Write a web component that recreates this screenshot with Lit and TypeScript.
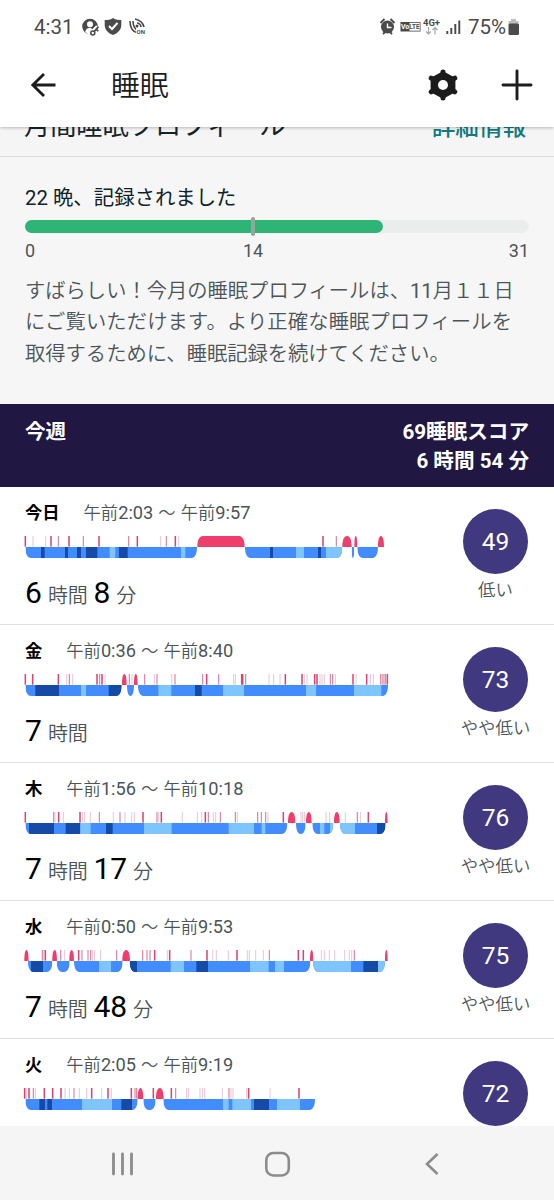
import { LitElement, html, css, svg } from "lit";
import { customElement, property } from "lit/decorators.js";

type Span = [number, number];
type Night = {
  day: string;
  range: string;
  duration: [string, string][];
  score: number;
  label: string;
  groups: Span[];
  deep: Span[];
  light: Span[];
  awake: Span[];
  strong: number[];
  medium: number[];
  faint: number[];
};

// Chart coordinates are in thirds of a pixel.
const nights: Night[] = [
  {
    day: "今日", range: "午前2:03 〜 午前9:57", duration: [["6", "時間"], ["8", "分"]], score: 49, label: "低い",
    groups: [[76, 591], [735, 1027], [1055, 1063], [1072, 1134]],
    deep: [[123, 134], [195, 204], [231, 243], [258, 292], [357, 383], [810, 819], [954, 963]],
    light: [[329, 346], [543, 556], [888, 912], [978, 1027]],
    awake: [[592, 734], [1027, 1055], [1063, 1072], [1134, 1152]],
    strong: [76, 153, 207, 297, 412, 526, 969],
    medium: [175, 250, 386, 499, 1009],
    faint: [99, 137, 482, 536],
  },
  {
    day: "金", range: "午前0:36 〜 午前8:40", duration: [["7", "時間"]], score: 73, label: "やや低い",
    groups: [[76, 365], [381, 402], [414, 1164]],
    deep: [[106, 177], [326, 365], [585, 605]],
    light: [[243, 258], [475, 514], [669, 732], [918, 948], [1062, 1144]],
    awake: [[366, 380], [402, 413]],
    strong: [76, 98, 175, 291, 306, 620, 725, 728, 856, 906, 944, 951, 1059, 1100, 1162],
    medium: [208, 299, 388, 434, 471, 525, 608, 656, 737, 991, 998, 1142, 1149, 1156],
    faint: [200, 218, 315, 396, 463, 515, 701, 706, 807, 821, 840, 913, 921, 960, 966, 973, 1006, 1068, 1111, 1120, 1146, 1153],
  },
  {
    day: "木", range: "午前1:56 〜 午前10:18", duration: [["7", "時間"], ["17", "分"]], score: 76, label: "やや低い",
    groups: [[76, 862], [888, 917], [937, 1000], [1020, 1157]],
    deep: [[87, 162], [197, 240], [318, 338], [1131, 1157]],
    light: [[241, 272], [432, 515], [686, 762], [785, 796], [960, 973], [990, 1000], [1020, 1065]],
    awake: [[864, 886], [918, 935], [1002, 1019], [1155, 1163]],
    strong: [76, 176, 240, 429, 484, 616, 850, 1105],
    medium: [161, 298, 360, 471, 625, 661, 706, 773, 784, 797, 1072],
    faint: [165, 190, 248, 254, 271, 340, 375, 395, 403, 476, 547, 592, 605, 640, 647, 712, 804, 903, 908, 914, 978, 989, 1036, 1082],
  },
  {
    day: "水", range: "午前0:50 〜 午前9:53", duration: [["7", "時間"], ["48", "分"]], score: 75, label: "やや低い",
    groups: [[84, 157], [170, 209], [222, 368], [389, 931], [939, 1155]],
    deep: [[93, 129], [389, 411], [589, 624], [1090, 1134]],
    light: [[297, 333], [512, 552], [750, 806], [825, 852], [939, 1053], [1134, 1155]],
    awake: [[73, 86], [157, 171], [208, 222], [367, 390], [930, 940], [1155, 1163]],
    strong: [136, 236, 464, 509, 621, 711, 895, 910],
    medium: [127, 182, 246, 264, 272, 350, 428, 441, 450, 573, 808, 1063],
    faint: [131, 194, 278, 284, 302, 502, 638, 649, 685, 742, 748, 767, 790, 964, 973, 988, 1004, 1034, 1048, 1055],
  },
  {
    day: "火", range: "午前2:05 〜 午前9:19", duration: [], score: 72, label: "",
    groups: [[76, 413], [430, 467], [490, 945]],
    deep: [[118, 135], [142, 156], [364, 396], [762, 807]],
    light: [[246, 336], [669, 686], [697, 753], [831, 900]],
    awake: [[413, 430], [468, 491]],
    strong: [74, 87, 133, 158, 183, 275, 324, 394, 460, 514, 746, 897],
    medium: [100, 222, 405, 410, 527, 687],
    faint: [79, 106, 195, 208, 238, 260, 305, 334, 560, 565, 600, 607, 614, 667, 693, 699, 740, 810],
  },
];

const trough = ([a, b]: Span) => {
  const r = Math.min(17, (b - a) / 2);
  return `M${a} 33C${a} 50 ${a + r * 0.25} 66 ${a + r} 66H${b - r}C${b - r * 0.25} 66 ${b} 50 ${b} 33Z`;
};
const hump = ([a, b]: Span) => {
  const r = Math.min(17, (b - a) / 2);
  return `M${a} 33C${a} 16 ${a + r * 0.25} 0 ${a + r} 0H${b - r}C${b - r * 0.25} 0 ${b} 16 ${b} 33Z`;
};

@customElement("sleep-night")
class SleepNight extends LitElement {
  @property({ attribute: false }) night!: Night;

  static styles = css`
    :host { display: block; height: 138px; box-sizing: border-box; border-bottom: 1px solid #e0e0e0; padding: 0 25px; background: #fff; }
    .row { display: flex; justify-content: space-between; }
    .info { display: flex; flex-direction: column; padding-top: 12px; }
    .head { display: flex; gap: 24px; height: 28px; line-height: 28px; font-size: 17.3px; white-space: nowrap; }
    .day { font-weight: 700; color: #000; }
    .range { color: #4b5559; font-size: 18.2px; font-weight: 450; word-spacing: 0.6px; }
    .kanji { font-size: 17.3px; font-weight: 350; }
    .chart { display: block; width: 365px; height: 22px; margin-top: 9px; overflow: visible; }
    .mid { fill: #418cff; }
    .deep { fill: #154ba6; }
    .light { fill: #7ec4ff; }
    .awake { fill: #ee3e6c; }
    .strong { fill: #db456c; }
    .medium { fill: #dc7f9a; }
    .faint { fill: #efc7d4; }
    .duration { display: flex; height: 36px; line-height: 36px; margin-top: 17px; white-space: nowrap; }
    .num { font-size: 30px; color: #000; }
    .unit { font-size: 20px; color: #4b5559; font-weight: 350; margin: 3px 5.5px 0 6px; }
    .score { width: 65px; display: flex; flex-direction: column; align-items: center; padding: 21.5px 1px 0 0; }
    .circle { width: 65px; height: 65px; border-radius: 50%; background: #41397f; color: #fff; font-size: 24.5px; line-height: 66px; text-align: center; }
    .label { margin-top: 2.5px; font-size: 17.4px; font-weight: 350; line-height: 28px; color: #4b5559; white-space: nowrap; }
  `;

  render() {
    const n = this.night;
    const bars = (list: Span[], cls: string) =>
      list.map(([a, b]) => svg`<rect class=${cls} x=${a} y="33" width=${b - a} height="33"></rect>`);
    const ticks = (list: number[], cls: string, w: number) =>
      list.map((x) => svg`<rect class=${cls} x=${x - w / 2} y="0" width=${w} height="32"></rect>`);
    const range = n.range.split(/(午前|〜)/).map((t) => (/[午〜]/.test(t) ? html`<span class="kanji">${t}</span>` : t));
    return html`
      <div class="row">
        <div class="info">
          <div class="head"><span class="day">${n.day}</span><span class="range">${range}</span></div>
          <svg class="chart" viewBox="75 0 1095 66">
            <clipPath id="asleep"><path d=${n.groups.map(trough).join("")}></path></clipPath>
            <g clip-path="url(#asleep)">${bars(n.groups, "mid")}${bars(n.deep, "deep")}${bars(n.light, "light")}</g>
            ${ticks(n.faint, "faint", 3.2)}${ticks(n.medium, "medium", 3.4)}${ticks(n.strong, "strong", 4.6)}
            <path class="awake" d=${n.awake.map(hump).join("")}></path>
          </svg>
          <div class="duration">
            ${n.duration.map(([v, u]) => html`<span class="num">${v}</span><span class="unit">${u}</span>`)}
          </div>
        </div>
        <div class="score">
          <div class="circle">${n.score}</div>
          <div class="label">${n.label}</div>
        </div>
      </div>`;
  }
}

@customElement("app-root")
class AppRoot extends LitElement {
  static styles = css`
    :host { display: flex; flex-direction: column; width: 554px; height: 1200px; overflow: hidden; background: #fff;
      font-family: Roboto, "Noto Sans CJK JP", sans-serif; }
    svg { display: block; flex: none; }
    .status { display: flex; align-items: center; justify-content: space-between; height: 43px; padding: 11px 33px 0 34px; box-sizing: border-box; color: #4a4a4a; font-size: 20.5px; line-height: 32px; }
    .side { display: flex; align-items: center; }
    .notices { margin-left: -2px; }
    .tiny { font-size: 6px; font-weight: 700; fill: #4a4a4a; }
    .volte { font-size: 7px; font-weight: 700; fill: #fff; }
    .net { font-size: 9.5px; font-weight: 700; fill: #4a4a4a; }
    .lte { fill: #4a4a4a; font-size: 6.5px; }
    .appbar { display: flex; align-items: center; height: 84px; flex: none; padding: 0 21px 0 30px; box-sizing: border-box; background: #fff; box-shadow: 0 1px 3px rgba(0,0,0,.25); clip-path: inset(0 0 -6px 0); z-index: 1; }
    .title { flex: 1; margin-left: 55px; font-size: 28.8px; line-height: 40px; color: #1c1c1c; font-weight: 350; padding-top: 1px; }
    .plus { margin-left: 42px; }
    .profile { display: flex; align-items: flex-end; justify-content: space-between; height: 30px; flex: none; box-sizing: border-box; overflow: hidden; padding: 0 28px 11px 24px; background: #f5f5f5; border-bottom: 1px solid #dcdcdc; white-space: nowrap; }
    .heading { font-size: 26.2px; line-height: 38px; color: #15242b; }
    .more { font-size: 23.6px; line-height: 36px; color: #107a7c; font-weight: 500; }
    .progress { height: 247px; flex: none; box-sizing: border-box; padding: 27px 25px 0; background: #f6f6f6; color: #4b5559; }
    .nights { font-size: 20.4px; line-height: 28px; color: #10222a; }
    .track { display: grid; margin-top: 5px; height: 19px; align-items: center; }
    .track > * { grid-area: 1 / 1; }
    .rail { height: 13px; border-radius: 7px; background: #ebedec; }
    .fill { height: 13px; width: 358px; border-radius: 7px; background: #2eb575; }
    .mark { width: 4px; height: 19px; border-radius: 2px; background: #94a59d; margin-left: 226px; }
    .scale { display: grid; grid-template-columns: 1fr 1fr 1fr; width: 504px; margin-top: 2px; font-size: 18px; line-height: 26px; }
    .half { text-align: center; margin-left: -48px; }
    .full { text-align: right; }
    .message { margin: 12px 0 0; font-size: 20.3px; line-height: 31.3px; font-weight: 350; white-space: nowrap; }
    .digits { font-weight: 400; }
    .wide { letter-spacing: 0.15px; }
    .week { display: flex; justify-content: space-between; height: 83px; flex: none; box-sizing: border-box; padding: 14px 25px 0; background: #201842; color: #fff; font-size: 20.6px; line-height: 29px; font-weight: 700; }
    .total { text-align: right; }
    .list { flex: 1; min-height: 0; overflow: hidden; }
    .nav { display: flex; align-items: center; height: 74px; flex: none; background: #f5f5f5; }
  `;

  render() {
    return html`
      <div class="status">
        <div class="side">
          <span>4:31</span>
          <svg class="notices" width="76" height="22" viewBox="0 0 76 22">
            <circle cx="18" cy="10.500" r="7.800" fill="#4a4a4a"></circle>
            <circle cx="18" cy="8.300" r="3" fill="#fff"></circle>
            <path d="M13.200 16c.5-3 2.500-4.300 4.800-4.300l2 1v5.600h-4Z" fill="#fff"></path>
            <path d="M19.500 19.500l-1.500-4 6-6 4 1-2 9Z" fill="#fff"></path>
            <circle cx="20.800" cy="17" r="2" fill="none" stroke="#4a4a4a" stroke-width="1.500"></circle>
            <path d="M22.200 15.500l4.300-4.800M24.300 13.300l2 1.800" fill="none" stroke="#4a4a4a" stroke-width="1.800"></path>
            <path d="M41 2c3 2 5.500 2 8.300 2v5c0 5-4 8.300-8.300 10-4.300-1.700-8.300-5-8.300-10V4c3 0 5.500 0 8.300-2Z" fill="#4a4a4a"></path>
            <path d="M37 10l3 3 5.500-6" fill="none" stroke="#fff" stroke-width="2"></path>
            <path d="M58 5c0 7 3 11 8 12M61 5c0 4 1 7 4 9M63 3c5 1 8 4 9 8M65 7c2 0 4 2 4 4" fill="none" stroke="#4a4a4a" stroke-width="1.600"></path>
            <circle cx="65" cy="10" r="1.500" fill="#4a4a4a"></circle>
            <rect x="64" y="12" width="10" height="7" fill="#fff"></rect>
            <text class="tiny" x="64.500" y="18">ON</text>
          </svg>
        </div>
        <div class="side">
          <svg width="89" height="22" viewBox="0 0 89 22">
            <circle cx="8.500" cy="11" r="6.500" fill="#4a4a4a"></circle>
            <path d="M8.500 7.500v4h4" fill="none" stroke="#fff" stroke-width="1.400"></path>
            <path d="M1.500 7l4-4M15.500 7l-4-4M4 18l2-2M13 18l-2-2" stroke="#4a4a4a" stroke-width="1.900"></path>
            <rect x="21.500" y="6" width="20" height="9.500" fill="#4a4a4a"></rect>
            <rect x="30.500" y="6.800" width="10.300" height="7.900" fill="#fff"></rect>
            <text class="volte" x="22" y="13.300" textLength="18.500" lengthAdjust="spacingAndGlyphs">Vo<tspan class="lte">LTE</tspan></text>
            <text class="net" x="44" y="9.500" textLength="17">4G+</text>
            <path d="M49.500 11v7m-2.500-2.500l2.500 2.500 2.500-2.500M56 18.500v-7m-2.500 2.500l2.500-2.500 2.500 2.500" fill="none" stroke="#a8a8a8" stroke-width="1.200"></path>
            <path d="M68.300 15v3M72.300 12v6M76.300 8v10M80.300 4.500v13.500" stroke="#4a4a4a" stroke-width="1.900"></path>
          </svg>
          <span>75%</span>
          <svg width="15" height="20" viewBox="0 0 15 20">
            <path d="M5 2h5v2h2.500v4h-10V4H5Z" fill="#bdbdbd"></path>
            <rect x="2.500" y="6.500" width="10.500" height="11.500" rx="1.500" fill="#4a4a4a"></rect>
          </svg>
        </div>
      </div>
      <div class="appbar">
        <svg width="26" height="26" viewBox="0 0 26 26"><path d="M14 2L2.800 13 14 24M3 13h22.500" fill="none" stroke="#1c1c1c" stroke-width="2.800"></path></svg>
        <div class="title">睡眠</div>
        <svg width="31" height="32" viewBox="-15 -16 31 32">
          <path d="M0-12.300L10.900-6.200V6.200L0 12.300-10.900 6.200V-6.200Z" fill="#1c1c1c" stroke="#1c1c1c" stroke-width="3" stroke-linejoin="round"></path>
          <path d="M0-13V13M-11.800-6.800L11.800 6.800M-11.800 6.800L11.800-6.800" stroke="#1c1c1c" stroke-width="5" stroke-linecap="round"></path>
          <circle r="5" fill="#fff"></circle>
        </svg>
        <svg class="plus" width="32" height="32" viewBox="-16 -16 32 32"><path d="M-14 0H14M0-14V14" stroke="#1c1c1c" stroke-width="2.900" stroke-linecap="round"></path></svg>
      </div>
      <div class="profile"><span class="heading">月間睡眠プロフィール</span><span class="more">詳細情報</span></div>
      <div class="progress">
        <div class="nights">22 晩、記録されました</div>
        <div class="track"><div class="rail"></div><div class="fill"></div><div class="mark"></div></div>
        <div class="scale"><span>0</span><span class="half">14</span><span class="full">31</span></div>
        <p class="message">すばらしい！今月の睡眠プロフィールは、<span class="digits">11</span>月１１日<br><span class="wide">にご覧いただけます。より正確な睡眠プロフィールを</span><br>取得するために、睡眠記録を続けてください。</p>
      </div>
      <div class="week"><div>今週</div><div class="total">69睡眠スコア<br>6 時間 54 分</div></div>
      <div class="list">${nights.map((n) => html`<sleep-night .night=${n}></sleep-night>`)}</div>
      <div class="nav">
        <svg width="554" height="74" viewBox="0 0 554 74" fill="none" stroke="#8c8c8c">
          <path d="M113.500 28v20M122.500 28v20M131.500 28v20" stroke-width="2.800" stroke-linecap="round"></path>
          <rect x="266.300" y="27" width="22.500" height="22.500" rx="7" stroke-width="2.600"></rect>
          <path d="M437.500 28l-10.500 10 10.500 10" stroke-width="2.600"></path>
        </svg>
      </div>`;
  }
}
